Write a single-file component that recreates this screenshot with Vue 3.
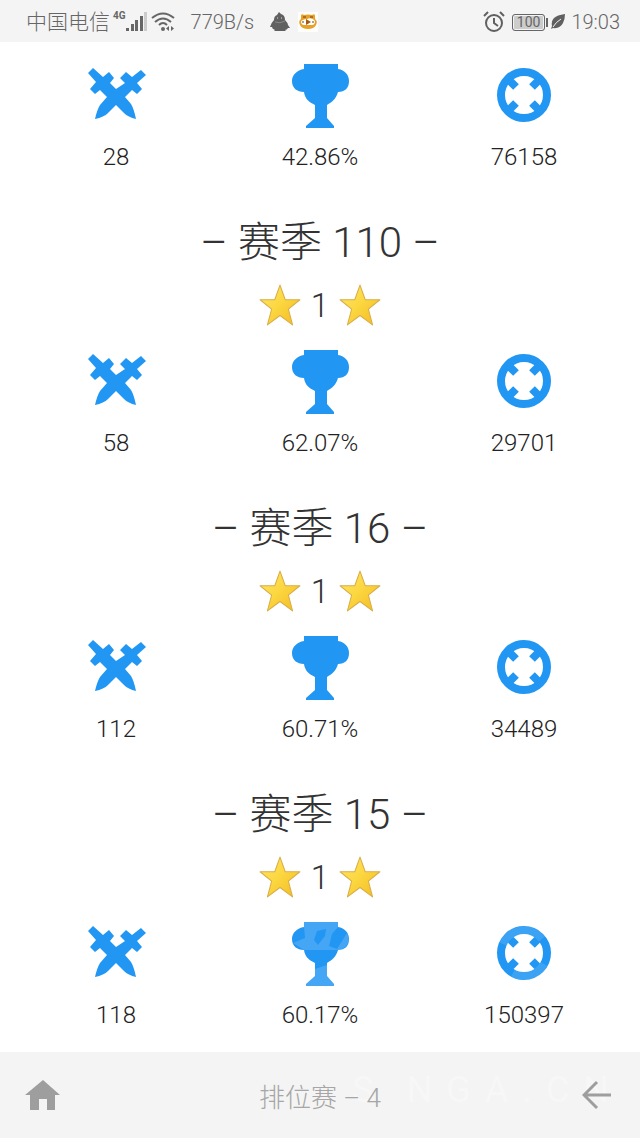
<script setup>
import { ref } from "vue";

//data
const seasons = ref([
  { id: 111, title: "", rank: 0, battles: "28", winRate: "42.86%", damage: "76158" },
  { id: 110, title: "– 赛季 110 –", rank: 1, battles: "58", winRate: "62.07%", damage: "29701" },
  { id: 16, title: "– 赛季 16 –", rank: 1, battles: "112", winRate: "60.71%", damage: "34489" },
  { id: 15, title: "– 赛季 15 –", rank: 1, battles: "118", winRate: "60.17%", damage: "150397", shiny: true },
]);

const watermark = ["S", "N", "G", "A", ".", "C", "N"];

//methods
const goHome = () => {
  console.log("Going home");
};

const goBack = () => {
  console.log("Going back");
};
</script>

<template>
  <div class="page">
    <header class="status">
      <div class="status-group">
        <span class="carrier">中国电信</span>
        <span class="network">4G</span>
        <svg class="signal" width="22" height="20" viewBox="0 0 22 20">
          <g fill="#666">
            <rect x="0" y="16" width="3" height="3" />
            <rect x="5" y="12" width="3" height="7" />
            <rect x="9" y="8" width="3" height="11" />
            <rect x="14" y="4" width="3" height="15" />
          </g>
          <rect x="18" y="0" width="3" height="19" fill="#ccc" />
        </svg>
        <svg class="wifi" width="24" height="20" viewBox="0 0 24 20">
          <g fill="none" stroke="#666" stroke-width="2">
            <path d="M1 6Q12-3 23 6" />
            <path d="M4 10Q12 3 20 10" />
            <path d="M8 13Q12 9 16 13" />
          </g>
          <circle cx="12" cy="17" r="2" fill="#666" />
          <path d="M18 14v5l-3-2.500zM20 14v5l3-2.500z" fill="#666" />
        </svg>
        <span class="speed">779B/s</span>
        <svg class="penguin" width="20" height="20" viewBox="0 0 20 20">
          <path d="M7 3L9 0L11 2Q15 3 15 8Q18 11 18 13L20 16L18 16Q17 18 15 18L16 19H4L5 18Q2 17 2 15L0 15Q1 11 4 8Q4 4 7 3Z" fill="#606060" />
          <path d="M7 6h1M11 6h1" stroke="#ddd" />
          <path d="M5 10Q10 12 15 9" fill="none" stroke="#888" />
        </svg>
        <svg class="face" width="20" height="20" viewBox="0 0 20 20">
          <rect width="20" height="20" fill="#fdfdfb" />
          <path d="M3 4Q3 1 6 3Q10 2 14 3Q17 1 17 4L17 7Q20 9 18 13Q16 17 10 17Q4 17 2 13Q0 9 3 7Z" fill="#e9a125" />
          <path d="M3 9Q6 7 9 7Q14 5 17 9Q17 13 14 13H6Q3 13 3 9Z" fill="#fff" />
          <path d="M8 7l5 3l-5 3z" fill="#a45b14" />
          <path d="M5 9v2M15 9v2M5 5h3M12 5h3" stroke="#704010" />
        </svg>
      </div>
      <div class="status-group">
        <svg width="22" height="22" viewBox="0 0 22 22" fill="none" stroke="#606060" stroke-width="2">
          <circle cx="11" cy="12" r="8" />
          <path d="M11 7v5l4 3M1 5l4-4M21 5l-4-4" />
        </svg>
        <div class="battery"><span>100</span></div>
        <svg class="leaf" width="15" height="16" viewBox="0 0 15 16">
          <path d="M14 0Q6 1 3 4Q0 7 1 12L0 15L2 14Q9 15 12 9Q14 5 14 0Z" fill="#606060" />
          <path d="M2 13Q5 8 10 5" fill="none" stroke="#f4f4f4" />
        </svg>
        <span class="clock">19:03</span>
      </div>
    </header>

    <main>
      <section v-for="season in seasons" :key="season.id" class="season">
        <h2 v-if="season.title">{{ season.title }}</h2>
        <div v-if="season.rank" class="rank">
          <svg v-for="side in 2" :key="side" class="star" width="42" height="44" viewBox="0 0 40 42">
            <defs>
              <linearGradient id="gold" x1="0" y1="0" x2="1" y2="1">
                <stop offset="0" stop-color="#ffe768" />
                <stop offset="0.5" stop-color="#fbd63f" />
                <stop offset="1" stop-color="#f4b921" />
              </linearGradient>
            </defs>
            <path
              d="M20 2L25 16L39 16L28 25L32 40L20 31L8 40L12 25L1 16L15 16Z"
              fill="url(#gold)"
              stroke="#d9ae48"
              stroke-linejoin="round"
            />
          </svg>
          <span>{{ season.rank }}</span>
        </div>
        <div class="stats">
          <div class="stat">
            <svg class="icon" viewBox="0 0 66 66">
              <path d="M5 10L10 5L20 14L26 9L31 15L27 20L33 26L42 20L37 15L43 9L49 14L58 7L63 12L54 20L59 26L54 31L49 27L42 34L48 41Q51 46 53 56Q45 54 41 50L33 42L25 50Q21 54 12 56Q14 47 17 42L24 34L17 27L12 31L7 26L13 19Z" />
            </svg>
            <span>{{ season.battles }}</span>
          </div>
          <div class="stat">
            <svg class="icon" viewBox="0 0 66 66">
              <path d="M17 1H51V6C58 7 62 12 62 18C62 25 58 29 51 29C49 36 45 39 40 42V55L47 63V65H19V63L28 55V42C22 39 18 36 17 29C10 29 5 25 5 18C5 12 10 7 17 6Z" />
              <path
                v-if="season.shiny"
                class="shine"
                d="M17 1H51V6L45 13L42 25L50 28L60 12Q63 19 60 24Q56 29 51 29H17L6 22L18 17L17 6ZM30 10L27 19L31 24L38 15L39 8ZM28 48L40 44V55L47 63V65H19V63L28 55Z"
                fill-rule="evenodd"
              />
            </svg>
            <span>{{ season.winRate }}</span>
          </div>
          <div class="stat">
            <svg class="icon" viewBox="0 0 66 66">
              <circle class="ring" cx="33" cy="32" r="23" />
              <path class="ticks" d="M17 16L25 24M49 16L41 24M17 48L25 40M49 48L41 40" />
              <path v-if="season.shiny" class="ring-shine" d="M12 23A23 23 0 0 1 51 18M53 43A23 23 0 0 1 22 52" />
            </svg>
            <span>{{ season.damage }}</span>
          </div>
        </div>
      </section>
    </main>

    <footer>
      <div class="watermark" aria-hidden="true">
        <span v-for="(letter, i) in watermark" :key="i">{{ letter }}</span>
      </div>
      <button type="button" aria-label="主页" @click="goHome">
        <svg width="36" height="32" viewBox="0 0 36 32">
          <path d="M18 1L35 16H30V31H22V20H14V31H5V16H0Z" fill="#9e9e9e" />
        </svg>
      </button>
      <span class="title">排位赛 – 4</span>
      <button type="button" aria-label="返回" @click="goBack">
        <svg width="30" height="30" viewBox="0 0 30 30">
          <path d="M15 2L2 15L15 28M2 15H29" fill="none" stroke="#9e9e9e" stroke-width="3" />
        </svg>
      </button>
    </footer>
  </div>
</template>

<style>
body {
  margin: 0;
  background: #fff;
}
</style>

<style scoped>
.page {
  display: flex;
  flex-direction: column;
  min-height: 100vh;
  font-family: Roboto, "Noto Sans CJK SC", sans-serif;
  font-weight: 300;
  color: #333;
}

.status {
  display: flex;
  justify-content: space-between;
  align-items: center;
  box-sizing: border-box;
  height: 42px;
  padding: 2px 20px 0 26px;
  background: #f4f4f4;
  color: #666;
  font-size: 20px;
  line-height: 24px;
}

.status-group {
  display: flex;
  align-items: center;
}

.carrier {
  font-size: 21px;
}

.network {
  align-self: flex-start;
  margin-left: 3px;
  font-size: 10px;
  line-height: 12px;
  font-weight: 700;
}

.wifi {
  margin-left: 3px;
}

.speed {
  margin-left: 16px;
}

.penguin {
  margin-left: 16px;
}

.face {
  margin-left: 8px;
}

.battery {
  display: flex;
  align-items: center;
  margin-left: 7px;
}

.battery span {
  padding: 0 4px;
  border: 1px solid #666;
  border-radius: 3px;
  background: #ccc;
  box-shadow: inset 0 0 0 1px #f4f4f4;
  font-size: 14px;
  line-height: 15px;
  font-weight: 400;
}

.battery::after {
  content: "";
  width: 2px;
  height: 9px;
  margin-left: 1px;
  background: #666;
}

.leaf {
  margin-left: 3px;
}

.clock {
  margin-left: 5px;
}

main {
  flex: 1;
  padding: 21px 14px 22px;
}

.season + .season {
  margin-top: 40px;
}

h2 {
  margin: 0 0 8px;
  text-align: center;
  font-size: 42px;
  line-height: 62px;
  font-weight: 300;
}

.rank {
  display: flex;
  justify-content: center;
  align-items: center;
  gap: 10px;
  height: 46px;
  margin-bottom: 21px;
  font-size: 33px;
}

.rank span {
  order: 1;
}

.star + .star {
  order: 2;
}

.stats {
  display: flex;
}

.stat {
  flex: 1;
  display: flex;
  flex-direction: column;
  align-items: center;
  gap: 13px;
  font-size: 24px;
  line-height: 30px;
  color: #222;
}

.icon {
  width: 66px;
  height: 66px;
  fill: #2196f3;
}

.icon .shine {
  fill: #fff;
  opacity: 0.16;
}

.ring,
.ticks {
  fill: none;
  stroke: #2196f3;
  stroke-width: 8px;
}

.ring-shine {
  fill: none;
  stroke: #fff;
  stroke-width: 8px;
  opacity: 0.12;
}

footer {
  position: relative;
  display: flex;
  justify-content: space-between;
  align-items: center;
  height: 86px;
  padding: 0 25px;
  background: #f4f4f4;
  overflow: hidden;
}

footer button {
  display: flex;
  justify-content: center;
  width: 36px;
  padding: 0;
  border: 0;
  background: none;
  cursor: pointer;
}

.title {
  font-size: 26px;
  color: #a6a6a6;
}

.watermark {
  position: absolute;
  top: 14px;
  right: 31px;
  display: flex;
  gap: 14px;
  font-size: 36px;
  line-height: 48px;
  font-weight: 400;
  color: #f7f7f7;
}

.watermark span:first-child {
  margin-right: 19px;
}

.title,
footer button {
  position: relative;
}
</style>
